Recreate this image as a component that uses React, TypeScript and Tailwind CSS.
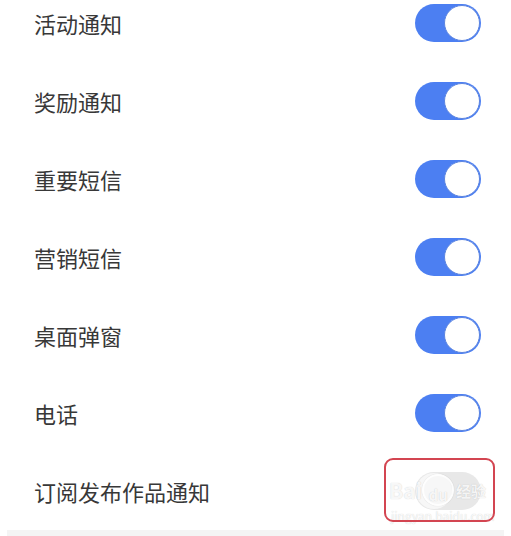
import React from "react";

const items = [
  { label: "活动通知", on: true },
  { label: "奖励通知", on: true },
  { label: "重要短信", on: true },
  { label: "营销短信", on: true },
  { label: "桌面弹窗", on: true },
  { label: "电话", on: true },
  { label: "订阅发布作品通知", on: false },
];

function Toggle({ on }: { on: boolean }) {
  if (!on) {
    return (
      <div className="flex h-[38px] w-[66px] items-center justify-start rounded-full bg-[#e8e8e8] p-[1px]">
        <div className="h-[36px] w-[36px] rounded-full bg-[#f7f7f7]" />
      </div>
    );
  }
  return (
    <div className="flex h-[38px] w-[66px] items-center justify-end rounded-full bg-[#4c7ff2] p-[1px]">
      <div className="h-[36px] w-[36px] rounded-full border border-[#5b84e0] bg-white" />
    </div>
  );
}

export default function App() {
  return (
    <div
      className="h-[536px] w-[511px] overflow-hidden bg-white"
      style={{ fontFamily: '"Noto Sans CJK SC", "Noto Sans", sans-serif' }}
    >
      <div className="-mt-[16px] flex flex-col">
        {items.map((it, i) => (
          <div
            key={i}
            className="relative flex h-[78px] items-center justify-between pl-[34px] pr-[30px]"
          >
            <span className="text-[22px] leading-none text-[#383838]">{it.label}</span>
            <Toggle on={it.on} />
            {!it.on && (
              <>
                {/* watermark */}
                <div className="pointer-events-none absolute left-[389px] top-[22px] flex items-center text-[21px] font-bold leading-none text-white/85 [text-shadow:0_0_1px_rgba(0,0,0,0.22)]">
                  <span>Bai</span>
                  <span className="flex h-[32px] w-[32px] items-end justify-center rounded-full border-[2px] border-white/85 pb-[2px] text-[15px] shadow-[0_0_1px_rgba(0,0,0,0.2)]">
                    du
                  </span>
                  <span className="ml-[2px] text-[15px]">经验</span>
                </div>
                <div className="pointer-events-none absolute left-[391px] top-[58px] text-[12px] leading-none text-white/85 [text-shadow:0_0_1px_rgba(0,0,0,0.22)]">
                  jingyan.baidu.com
                </div>
                {/* highlight box */}
                <div className="pointer-events-none absolute left-[384px] top-[6px] h-[64px] w-[111px] rounded-[9px] border-[2.5px] border-[#d34551]" />
              </>
            )}
          </div>
        ))}
      </div>
      <div className="mx-[7px] h-[20px] bg-[#f4f4f4]" />
    </div>
  );
}
